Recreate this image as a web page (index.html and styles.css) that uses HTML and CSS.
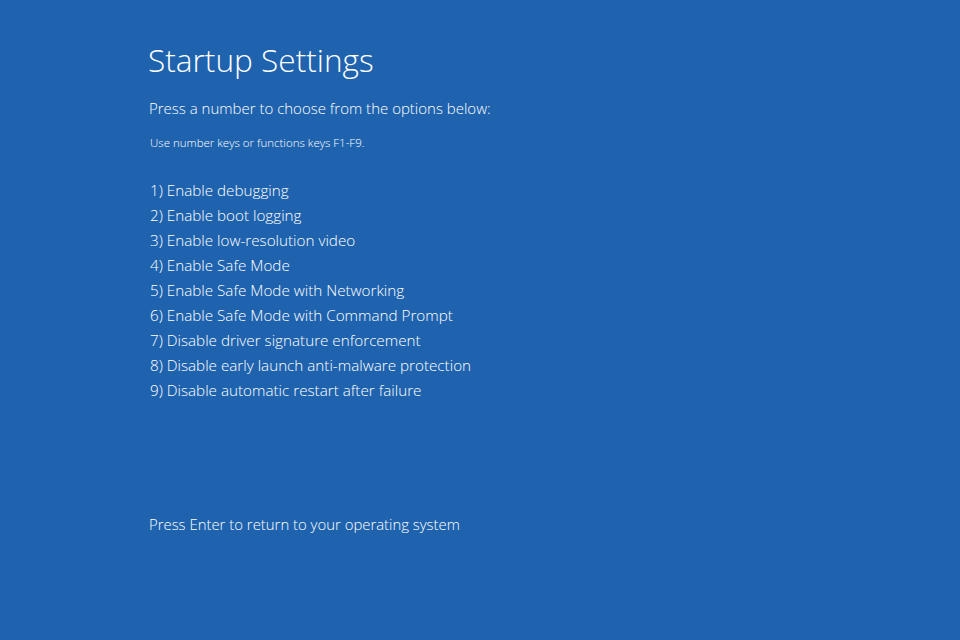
FILE: index.html
```html
<!DOCTYPE html>
<html lang="en">
<head>
<meta charset="utf-8">
<title>Startup Settings</title>
<link rel="stylesheet" href="styles.css">
</head>
<body>
<main class="screen">
  <h1 class="title">Startup Settings</h1>
  <p class="lead">Press a number to choose from the options below:</p>
  <p class="hint">Use number keys or functions keys F1-F9.</p>
  <ol class="options">
    <li>1) Enable debugging</li>
    <li>2) Enable boot logging</li>
    <li>3) Enable low-resolution video</li>
    <li>4) Enable Safe Mode</li>
    <li>5) Enable Safe Mode with Networking</li>
    <li>6) Enable Safe Mode with Command Prompt</li>
    <li>7) Disable driver signature enforcement</li>
    <li>8) Disable early launch anti-malware protection</li>
    <li>9) Disable automatic restart after failure</li>
  </ol>
  <p class="footer">Press Enter to return to your operating system</p>
</main>
</body>
</html>
```
FILE: styles.css
```css
html, body {
  margin: 0;
  padding: 0;
  height: 100%;
  background: #1f63ae;
}
.screen {
  height: 640px;
  box-sizing: border-box;
  padding: 38px 0 0 148px;
  color: #ffffff;
  font-family: "Open Sans", "Noto Sans", sans-serif;
  display: flex;
  flex-direction: column;
}
.title {
  margin: 0;
  font-size: 31.6px;
  font-weight: 300;
  line-height: 44px;
}
.lead {
  margin: 16px 0 0 1px;
  font-size: 15px;
  font-weight: 300;
  line-height: 20px;
}
.hint {
  margin: 17px 0 0 2px;
  font-size: 11.5px;
  font-weight: 300;
  line-height: 16px;
}
.options {
  list-style: none;
  margin: 27px 0 0 2px;
  padding: 0;
  font-size: 15.22px;
  font-weight: 300;
  line-height: 25px;
}
.footer {
  margin: 111px 0 0 1px;
  font-size: 14.9px;
  font-weight: 300;
  line-height: 20px;
}
```
